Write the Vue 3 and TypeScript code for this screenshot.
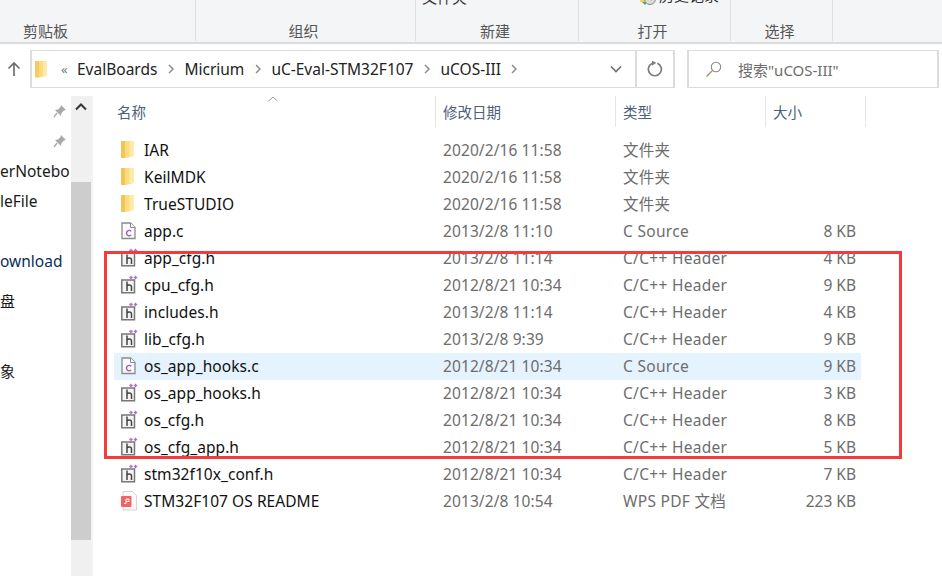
<script setup lang="ts">
interface Row { name: string; date: string; type: string; size: string; icon: 'folder' | 'c' | 'h' | 'pdf'; active?: boolean }
const hdr = 'C/C++ Header'
const rows: Row[] = [
  { name: 'IAR', date: '2020/2/16 11:58', type: '文件夹', size: '', icon: 'folder' },
  { name: 'KeilMDK', date: '2020/2/16 11:58', type: '文件夹', size: '', icon: 'folder' },
  { name: 'TrueSTUDIO', date: '2020/2/16 11:58', type: '文件夹', size: '', icon: 'folder' },
  { name: 'app.c', date: '2013/2/8 11:10', type: 'C Source', size: '8 KB', icon: 'c' },
  { name: 'app_cfg.h', date: '2013/2/8 11:14', type: hdr, size: '4 KB', icon: 'h' },
  { name: 'cpu_cfg.h', date: '2012/8/21 10:34', type: hdr, size: '9 KB', icon: 'h' },
  { name: 'includes.h', date: '2013/2/8 11:14', type: hdr, size: '4 KB', icon: 'h' },
  { name: 'lib_cfg.h', date: '2013/2/8 9:39', type: hdr, size: '9 KB', icon: 'h' },
  { name: 'os_app_hooks.c', date: '2012/8/21 10:34', type: 'C Source', size: '9 KB', icon: 'c', active: true },
  { name: 'os_app_hooks.h', date: '2012/8/21 10:34', type: hdr, size: '3 KB', icon: 'h' },
  { name: 'os_cfg.h', date: '2012/8/21 10:34', type: hdr, size: '8 KB', icon: 'h' },
  { name: 'os_cfg_app.h', date: '2012/8/21 10:34', type: hdr, size: '5 KB', icon: 'h' },
  { name: 'stm32f10x_conf.h', date: '2012/8/21 10:34', type: hdr, size: '7 KB', icon: 'h' },
  { name: 'STM32F107 OS README', date: '2013/2/8 10:54', type: 'WPS PDF 文档', size: '223 KB', icon: 'pdf' },
]
const crumbs = ['EvalBoards', 'Micrium', 'uC-Eval-STM32F107', 'uCOS-III']
</script>

<template>
  <div class="win">
    <header class="ribbon">
      <div class="grp first"><span class="lbl">剪贴板</span></div>
      <div class="grp g2"><span class="lbl">组织</span></div>
      <div class="grp g3"><span class="cut cut1">文件夹</span><span class="lbl">新建</span></div>
      <div class="grp g4">
        <span class="cut cut2">
          <svg width="18" height="12" viewBox="0 0 18 12"><path d="M1 0h7v6H1z" fill="#f3d268"/><path d="M3 6h5l-2 3z" fill="#4caf3f"/><circle cx="11" cy="3" r="5.500" fill="#dcdcdc" stroke="#8a8a8a"/><path d="M11 0v3l2 1" fill="none" stroke="#666"/></svg>
          历史记录
        </span>
        <span class="lbl">打开</span>
      </div>
      <div class="grp g5"><span class="lbl">选择</span></div>
    </header>

    <div class="addr">
      <svg class="up" width="14" height="16" viewBox="0 0 14 16"><path d="M7 15V2M1.500 7.500 7 2l5.500 5.500" fill="none" stroke="#6f6f6f" stroke-width="1.700"/></svg>
      <div class="path">
        <svg class="pf" width="12" height="18" viewBox="0 0 12 18"><path d="M0 1h11.500v15L4 17.500H0z" fill="#fbdc7e"/><path d="M0 1h4v16.500H0z" fill="#f0bf4c" opacity=".55"/><path d="M8 1h3.500v15H8z" fill="#ffe9a6"/></svg>
        <span class="dbl">«</span>
        <template v-for="c in crumbs" :key="c">
          <span class="crumb">{{ c }}</span>
          <svg class="sep" width="6" height="10" viewBox="0 0 6 10"><path d="m1 1 4 4-4 4" fill="none" stroke="#8a8a8a" stroke-width="1.500"/></svg>
        </template>
        <span class="grow"></span>
        <svg class="dd" width="12" height="8" viewBox="0 0 12 8"><path d="m1 1.500 5 5 5-5" fill="none" stroke="#707070" stroke-width="1.700"/></svg>
        <span class="refresh">
          <svg width="16" height="16" viewBox="0 0 16 16"><path d="M10.300 2.200A6.500 6.500 0 1 1 5 2.400" fill="none" stroke="#7c7c7c" stroke-width="1.700"/><path d="M3.500 .5 8.500 .5 6 5z" fill="#7c7c7c" transform="rotate(25 6 3)"/></svg>
        </span>
      </div>
      <div class="search">
        <svg width="17" height="17" viewBox="0 0 17 17"><circle cx="11" cy="6" r="4.700" fill="none" stroke="#8a8a8a" stroke-width="1.100"/><path d="M7.500 9.500 1.500 15.500" stroke="#b08a5c" stroke-width="1.300"/></svg>
        <span>搜索"uCOS-III"</span>
      </div>
    </div>

    <div class="body">
      <aside class="side">
        <div class="tree">
          <div class="ti pin"><svg width="14" height="14" viewBox="0 0 14 14"><path d="m8 1 5 5-2 .5-2.500 2.500L8 12 2 6l3-.5L7.500 3z" fill="#a9a9a9"/><path d="M4 9 1 13" stroke="#a9a9a9" stroke-width="1.300"/></svg></div>
          <div class="ti pin"><svg width="14" height="14" viewBox="0 0 14 14"><path d="m8 1 5 5-2 .5-2.500 2.500L8 12 2 6l3-.5L7.500 3z" fill="#a9a9a9"/><path d="M4 9 1 13" stroke="#a9a9a9" stroke-width="1.300"/></svg></div>
          <div class="ti">erNotebo</div>
          <div class="ti">leFile</div>
          <div class="ti t3">ownload</div>
          <div class="ti t4">盘</div>
          <div class="ti t5">象</div>
        </div>
        <div class="bar">
          <div class="arrow"><svg width="12" height="8" viewBox="0 0 12 8"><path d="m1 6.500 5-5 5 5" fill="none" stroke="#333" stroke-width="2"/></svg></div>
          <div class="thumb"></div>
        </div>
      </aside>

      <main class="list">
        <div class="heads">
          <svg class="sort" width="10" height="6" viewBox="0 0 10 6"><path d="m.5 5 4.500-4 4.500 4" fill="none" stroke="#9a9a9a"/></svg>
          <div class="h h1">名称</div>
          <div class="h h2">修改日期</div>
          <div class="h h3">类型</div>
          <div class="h h4">大小</div>
        </div>
        <div class="rows">
          <div v-for="r in rows" :key="r.name" class="row" :class="{ active: r.active }">
            <div class="ic">
              <svg v-if="r.icon === 'folder'" width="13" height="18" viewBox="0 0 13 18"><path d="M0 0h12.500v15L5 17H0z" fill="#fbdc7e"/><path d="M0 0h4v17H0z" fill="#eeb94a" opacity=".7"/><path d="M8.500 0h4v15h-4z" fill="#ffeaa8"/></svg>
              <svg v-else-if="r.icon === 'c'" width="15" height="18" viewBox="0 0 15 18"><path d="M1 1h8.500L14 5.500V16.500H1z" fill="#f9f9f9" stroke="#8b8b8b" stroke-width="1.300"/><path d="M9.500 1v4.500H14" fill="#fff" stroke="#8b8b8b"/><path d="M10.200 9.300a2.700 2.700 0 1 0 0 3.600" fill="none" stroke="#a05fb8" stroke-width="1.400"/></svg>
              <svg v-else-if="r.icon === 'h'" width="17" height="19" viewBox="0 0 17 19"><path d="M.8 5H13.500V17.800H.8z" fill="#f4f4f4" stroke="#777" stroke-width="1.500"/><path d="M6 6.500v9.500M6 11c1-1.200 4.500-1.500 4.500 1v4" fill="none" stroke="#444" stroke-width="1.500"/><path d="M10 .8v3.500M8.300 2.500h3.400M14.500.8v3.500M12.800 2.500h3.400" stroke="#b070c8" stroke-width="1.300"/></svg>
              <svg v-else width="16" height="20" viewBox="0 0 16 20"><path d="M2 .5h9.500L15.500 4.500V19H2z" fill="#fafafa" stroke="#d4d4d4"/><rect x="0" y="5" width="10.500" height="11" rx="1" fill="#f06464"/><path d="M3 12.500h2V8h3v2.500H5" fill="none" stroke="#fff" stroke-width="1"/></svg>
            </div>
            <div class="name">{{ r.name }}</div>
            <div class="date">{{ r.date }}</div>
            <div class="type">{{ r.type }}</div>
            <div class="size">{{ r.size }}</div>
          </div>
        </div>
        <div class="mark"></div>
      </main>
    </div>
  </div>
</template>

<style>
html, body { margin: 0; background: #fff; overflow: hidden; }
</style>

<style scoped>
.win { width: 942px; height: 576px; overflow: hidden; display: flex; flex-direction: column; font-family: "Noto Sans", "Noto Sans CJK SC", sans-serif; font-size: 15.500px; color: #111; background: #fff; }
.ribbon { height: 44px; box-sizing: border-box; display: flex; background: #f4f5f7; border-bottom: 2px solid #dcdcdc; font-family: "Noto Sans CJK SC", sans-serif; }
.grp { box-sizing: border-box; height: 41px; overflow: hidden; border-right: 1px solid #dedfe1; display: flex; flex-direction: column; justify-content: flex-end; align-items: center; padding-right: 4px; }
.first { width: 196px; align-items: flex-start; padding-left: 23px; padding-right: 0; }
.g2 { width: 220px; }
.g3 { width: 163px; }
.g4 { width: 152px; }
.g5 { width: 102px; }
.lbl { font-size: 15px; line-height: 20px; color: #555; }
.cut { flex: none; font-size: 15px; line-height: 22px; color: #333; white-space: nowrap; display: flex; align-items: center; align-self: flex-start; margin-bottom: 13px; }
.cut1 { margin-left: 6px; }
.cut2 { margin-left: 60px; gap: 2px; }
.cut2 svg { margin-top: 14px; }
.addr { height: 38px; margin-top: 6px; display: flex; align-items: center; }
.up { margin: 0 9px 0 7px; flex: none; }
.path { width: 645px; height: 38px; box-sizing: border-box; border: 2px solid #dcdcdc; border-width: 1px 2px; display: flex; align-items: center; flex: none; color: #222; }
.pf { margin-left: 3px; flex: none; }
.dbl { margin-left: 14px; color: #777; font-size: 13px; width: 16px; }
.crumb { white-space: nowrap; }
.sep { margin: 0 10.500px; flex: none; }
.grow { flex: 1; }
.dd { margin-right: 13px; }
.refresh { width: 38px; height: 36px; border-left: 2px solid #dcdcdc; display: flex; align-items: center; justify-content: center; box-sizing: border-box; }
.search { margin-left: 12px; width: 252px; height: 38px; box-sizing: border-box; border: 2px solid #dcdcdc; border-width: 1px 2px; display: flex; align-items: center; gap: 16px; padding-left: 16px; color: #6d6d6d; font-size: 15px; flex: none; }
.body { flex: 1; display: flex; margin-top: 8px; min-height: 0; }
.side { width: 91px; display: flex; flex: none; }
.tree { width: 71px; overflow: hidden; color: #1a1a1a; display: flex; flex-direction: column; }
.ti { height: 30px; line-height: 30px; white-space: nowrap; flex: none; }
.pin { display: flex; align-items: center; justify-content: flex-end; padding-right: 4px; }
.t3 { margin-top: 30px; color: #0a2f5c; }
.t4 { margin-top: 10px; font-size: 15px; }
.t5 { margin-top: 40px; font-size: 15px; }
.bar { width: 20px; background: #f0f0f0; display: flex; flex-direction: column; }
.arrow { height: 22px; display: flex; align-items: center; justify-content: center; }
.thumb { margin-top: 64px; height: 358px; background: #cdcdcd; }
.list { flex: 1; position: relative; border-left: 2px solid #f3f3f3; min-width: 0; }
.heads { height: 31px; display: flex; position: relative; }
.sort { position: absolute; left: 175px; top: 0; }
.h { box-sizing: border-box; height: 31px; border-right: 1px solid #e5e5e5; padding-left: 7px; color: #4c607a; font-family: "Noto Sans CJK SC", sans-serif; font-size: 14.500px; line-height: 31px; }
.h1 { width: 343px; padding-left: 24px; }
.h2 { width: 180px; }
.h3 { width: 150px; }
.h4 { width: 100px; }
.rows { margin-top: 10px; }
.row { height: 27px; margin-left: 21px; width: 747px; display: flex; align-items: center; box-sizing: border-box; line-height: 27px; white-space: nowrap; }
.row.active { background: #e5f3ff; }
.ic { width: 30px; height: 25px; padding-left: 7px; box-sizing: border-box; display: flex; align-items: center; flex: none; margin-bottom: 2px; }
.name { width: 299px; color: #111; letter-spacing: .05px; }
.date { width: 180px; color: #6d6d6d; letter-spacing: .1px; }
.type { width: 150px; color: #6d6d6d; letter-spacing: .3px; }
.size { width: 83px; text-align: right; color: #6d6d6d; }
.mark { position: absolute; left: 11px; top: 155px; width: 798px; height: 208px; box-sizing: border-box; border: 3px solid #f33b3b; }
</style>
